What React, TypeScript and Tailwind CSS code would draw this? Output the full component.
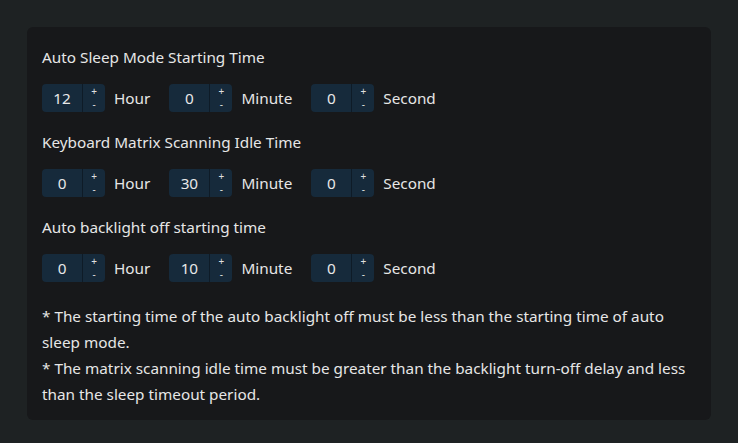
import { Fragment } from 'react';

const sections = [
  { title: 'Auto Sleep Mode Starting Time', values: [12, 0, 0] },
  { title: 'Keyboard Matrix Scanning Idle Time', values: [0, 30, 0] },
  { title: 'Auto backlight off starting time', values: [0, 10, 0] },
];

const units = ['Hour', 'Minute', 'Second'];

function Stepper({ value }: { value: number }) {
  return (
    <div className="flex h-[28px] w-[63px] overflow-hidden rounded-[4px] bg-[#162a3b]">
      <div className="flex w-[41px] items-center justify-center border-r border-[#0e1b27] text-[15.3px] text-[#e8e8e8]">
        {value}
      </div>
      <div className="flex flex-1 flex-col items-center justify-between text-[#e0e0e0]">
        <span className="block h-[14px] text-[10px] leading-[15px]">+</span>
        <span className="block h-[14px] text-[10px] leading-[13px]">-</span>
      </div>
    </div>
  );
}

export default function App() {
  return (
    <div
      className="min-h-[443px] w-full bg-[#1e2223] px-[27px] pt-[27px] text-[#e6e6e6]"
      style={{ fontFamily: '"Noto Sans", "Open Sans", sans-serif' }}
    >
      <div className="rounded-[6px] bg-[#17181a] px-[15px] pb-[13px] pt-[18px]">
        {sections.map((section) => (
          <div key={section.title} className="mb-[18px]">
            <p className="text-[15.3px] leading-[24px]">{section.title}</p>
            <div className="mt-[15px] flex items-center">
              {section.values.map((v, i) => (
                <Fragment key={units[i]}>
                  <Stepper value={v} />
                  <span className="ml-[9px] mr-[19px] text-[15.3px]">{units[i]}</span>
                </Fragment>
              ))}
            </div>
          </div>
        ))}
        <div className="pt-[3px] text-[15.3px] leading-[26px]">
          <p>* The starting time of the auto backlight off must be less than the starting time of auto sleep mode.</p>
          <p>* The matrix scanning idle time must be greater than the backlight turn-off delay and less than the sleep timeout period.</p>
        </div>
      </div>
    </div>
  );
}
